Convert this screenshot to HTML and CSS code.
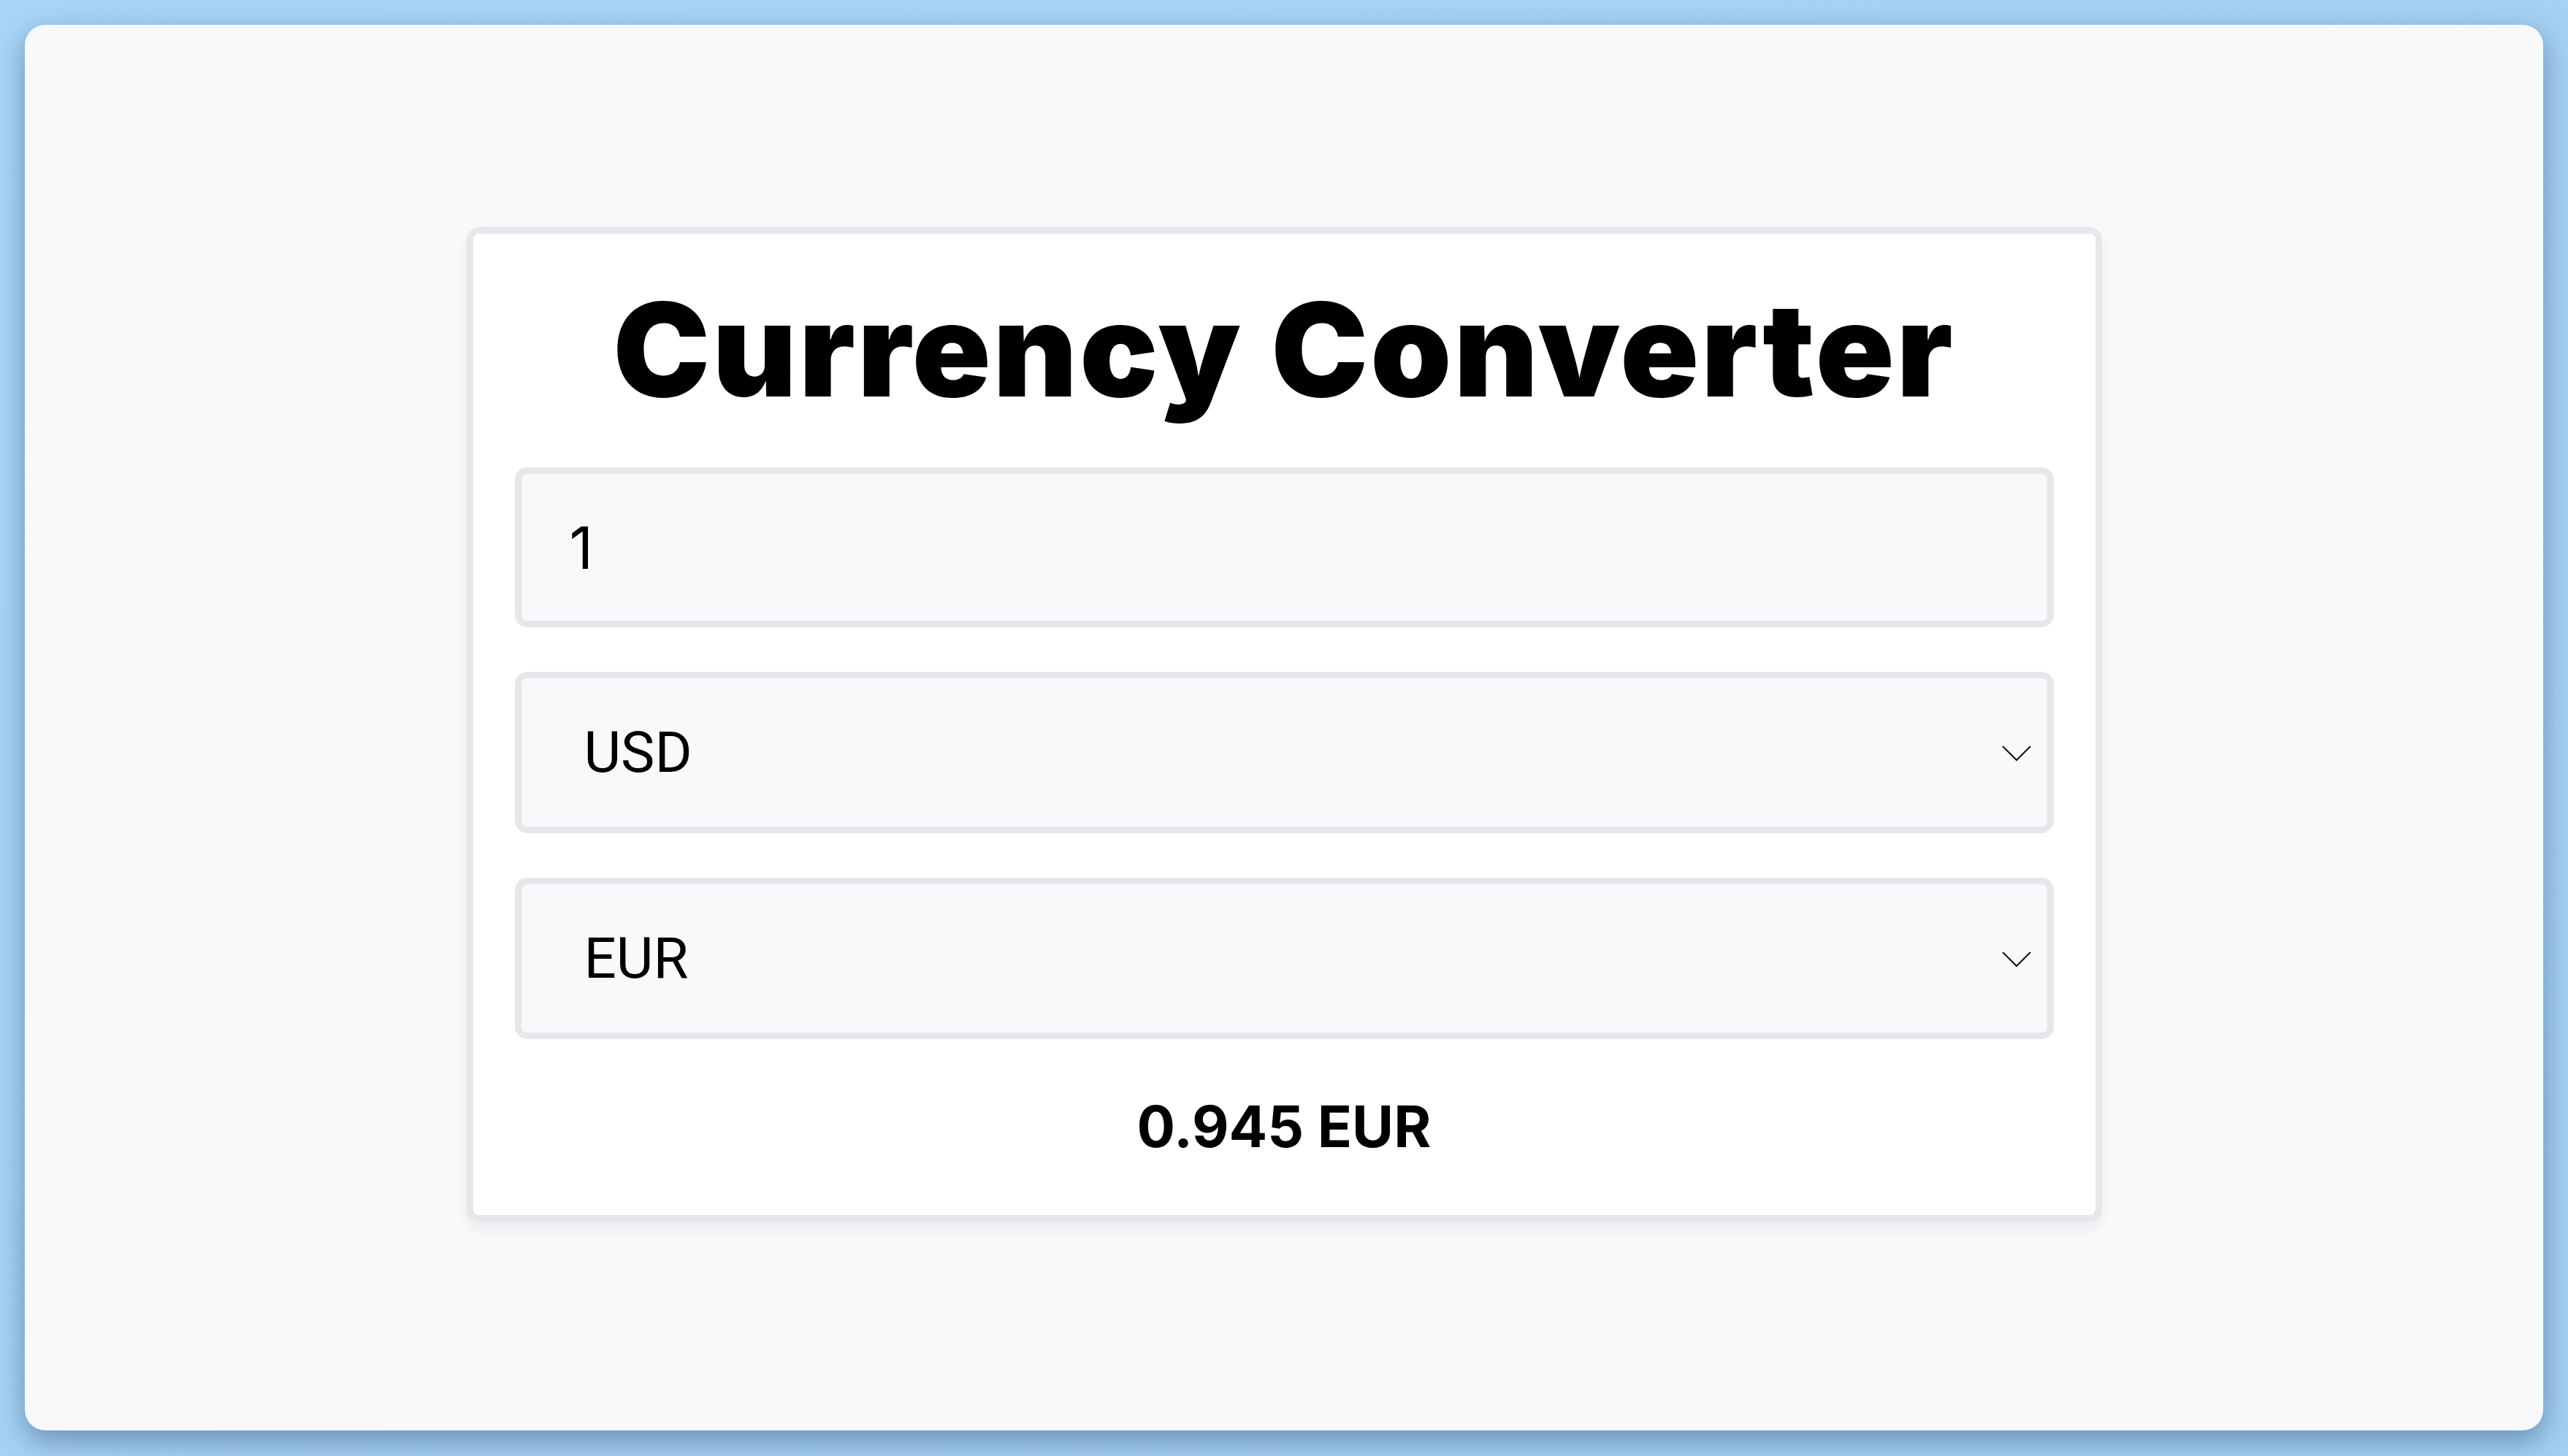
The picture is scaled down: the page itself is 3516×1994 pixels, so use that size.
FILE: index.html
```html
<!DOCTYPE html>
<html lang="en">
<head>
<meta charset="utf-8">
<title>Currency Converter</title>
<link rel="stylesheet" href="styles.css">
</head>
<body>
<div class="window">
  <div class="card">
    <h1 class="title">Currency Converter</h1>
    <div class="fields">
      <input class="amount" type="text" value="1">
      <div class="select-box">
        <select class="select">
          <option>USD</option>
        </select>
        <svg class="chevron" viewBox="0 0 40 22" width="40" height="22"><path d="M1 1 L20 20 L39 1" fill="none" stroke="#111" stroke-width="2"/></svg>
      </div>
      <div class="select-box">
        <select class="select">
          <option>EUR</option>
        </select>
        <svg class="chevron" viewBox="0 0 40 22" width="40" height="22"><path d="M1 1 L20 20 L39 1" fill="none" stroke="#111" stroke-width="2"/></svg>
      </div>
    </div>
    <div class="result">0.945 EUR</div>
  </div>
</div>
</body>
</html>
```

FILE: styles.css
```css
html, body {
  margin: 0;
  padding: 0;
}
body {
  width: 3516px;
  height: 1994px;
  background: linear-gradient(135deg, #a9d6f8 0%, #a6d2f4 50%, #a3d0f3 100%);
  font-family: Inter, "Noto Sans", sans-serif;
  overflow: hidden;
}
.window {
  margin: 34px 34px 0 34px;
  height: 1925px;
  background: #f8f9fb;
  border-radius: 28px;
  box-shadow: 0 14px 40px rgba(30, 60, 100, 0.45);
  display: flex;
  align-items: center;
  justify-content: center;
}
.card {
  width: 2239px;
  box-sizing: border-box;
  margin-top: -9px;
  background: #ffffff;
  border: 9px solid #e5e7eb;
  border-radius: 17px;
  padding: 71px 57px 82px 57px;
  box-shadow: 0 10px 18px rgba(0, 0, 0, 0.06);
  display: flex;
  flex-direction: column;
}
.title {
  margin: 0 0 73px 0;
  font-family: Inter, sans-serif;
  font-weight: 900;
  font-size: 178px;
  line-height: 176px;
  text-align: center;
  color: #000;
  letter-spacing: 3px;
}
.fields {
  display: flex;
  flex-direction: column;
  gap: 61px;
}
.amount {
  box-sizing: border-box;
  height: 219px;
  width: 100%;
  margin: 0;
  border: 9px solid #e5e7eb;
  border-radius: 17px;
  background: #f8f9fb;
  padding: 0 0 0 66px;
  font-family: Inter, sans-serif;
  font-size: 80px;
  font-weight: 400;
  color: #000;
  outline: none;
}
.select-box {
  box-sizing: border-box;
  height: 221px;
  border: 9px solid #e5e7eb;
  border-radius: 17px;
  background: #f8f9fb;
  display: flex;
  align-items: center;
}
.select {
  flex: 1;
  appearance: none;
  -webkit-appearance: none;
  border: none;
  background: transparent;
  height: 100%;
  margin: 0;
  padding: 0 0 0 86px;
  font-family: Roboto, sans-serif;
  font-size: 78px;
  font-weight: 400;
  color: #000;
  outline: none;
}
.chevron {
  flex: none;
  margin-right: 22px;
  margin-top: 2px;
}
.result {
  margin-top: 81px;
  font-family: Inter, sans-serif;
  font-weight: 700;
  font-size: 78px;
  line-height: 78px;
  text-align: center;
  color: #000;
}
```
